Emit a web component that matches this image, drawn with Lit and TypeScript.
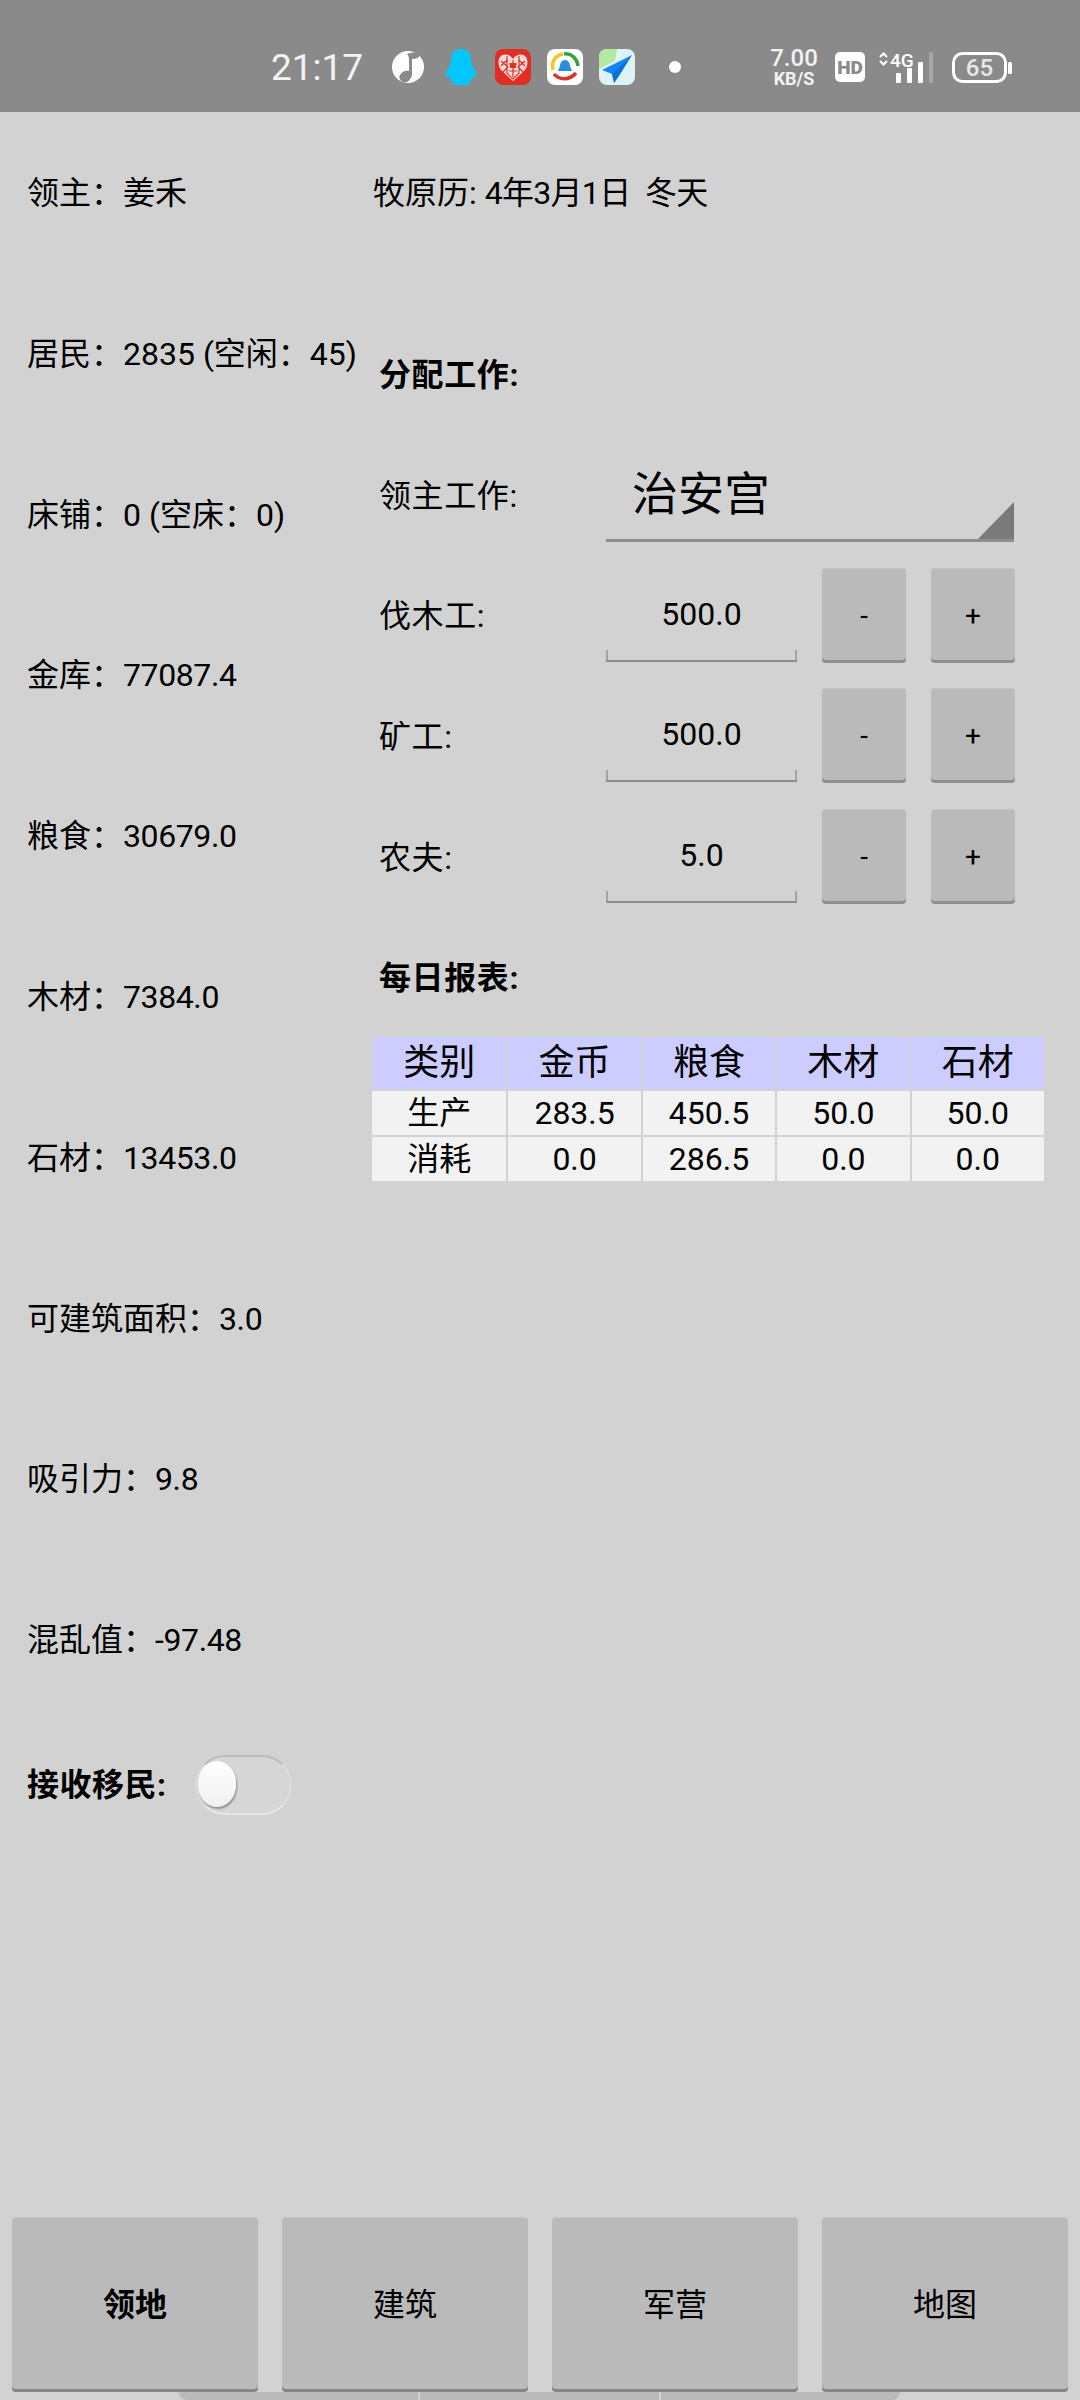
import { LitElement, html, css } from 'lit';
import { customElement } from 'lit/decorators.js';
import { classMap } from 'lit/directives/class-map.js';

const STATS = [
  { label: '领主：', value: '姜禾' },
  { label: '居民：', value: '2835 (空闲：45)' },
  { label: '床铺：', value: '0 (空床：0)' },
  { label: '金库：', value: '77087.4' },
  { label: '粮食：', value: '30679.0' },
  { label: '木材：', value: '7384.0' },
  { label: '石材：', value: '13453.0' },
  { label: '可建筑面积：', value: '3.0' },
  { label: '吸引力：', value: '9.8' },
  { label: '混乱值：', value: '-97.48' },
];

const WORKERS = [
  { label: '伐木工:', value: '500.0' },
  { label: '矿工:', value: '500.0' },
  { label: '农夫:', value: '5.0' },
];

const REPORT = [
  ['生产', '283.5', '450.5', '50.0', '50.0'],
  ['消耗', '0.0', '286.5', '0.0', '0.0'],
];

@customElement('status-bar')
export class StatusBar extends LitElement {
  static styles = css`
    :host {
      display: flex;
      align-items: center;
      height: 112px;
      box-sizing: border-box;
      padding: 22px 0 0 271px;
      background: #8a8a8a;
      color: #f2f2f2;
      font-family: Roboto, sans-serif;
    }
    svg { display: block; flex: none; }
    .time { width: 91px; font-size: 37px; line-height: 1; }
    .music { margin-left: 30px; }
    .qq { margin-left: 21px; }
    .pdd { margin-left: 18px; }
    .news { margin-left: 16px; }
    .map { margin-left: 16px; }
    .dot {
      width: 12px;
      height: 12px;
      margin-left: 34px;
      border-radius: 50%;
      background: #fff;
    }
    .speed {
      width: 50px;
      margin-left: 88px;
      text-align: center;
      font-weight: 500;
    }
    .speed div:first-child { font-size: 24px; line-height: 24px; }
    .speed div:last-child { font-size: 18px; line-height: 18px; font-weight: 700; }
    .hd { margin-left: 16px; }
    .signal { margin-left: 14px; }
    .battery { margin-left: 19px; }
    text { font-family: Roboto, sans-serif; }
  `;

  render() {
    return html`
      <div class="time">21:17</div>
      <svg class="music" width="32" height="32" viewBox="0 0 32 32">
        <circle cx="16" cy="16" r="16" fill="#fff" />
        <path d="M15 3 C19 1 23 1 27 3 L27 6 C24 8 21 8 20 8 L20 24 C19 29 15 31.5 13 31.5 C9 31 6 27 8 24 C10 20 14 19 17 20 L17 8 C17 6 16 4 15 3 Z" fill="#8a8a8a" />
      </svg>
      <svg class="qq" width="32" height="36" viewBox="0 0 32 36">
        <path d="M16 0 C9 0 6 5 6 11 C6 14 5 16 3 20 C1 23 0 26 1 28 C2 29 3 28 4 27 C5 30 6 31 8 33 C6 34 7 36 11 36 L21 36 C25 36 26 34 24 33 C26 31 27 30 28 27 C29 28 30 29 31 28 C32 26 31 23 29 20 C27 16 26 14 26 11 C26 5 23 0 16 0 Z" fill="#00c8ff" />
      </svg>
      <svg class="pdd" width="36" height="36" viewBox="0 0 36 36">
        <rect width="36" height="36" rx="8" fill="#e02e24" />
        <path d="M18 10 C15 5 8 4 5 8 C2 13 4 19 7 22 L18 32 L29 22 C32 19 34 13 31 8 C28 4 21 5 18 10 Z" fill="#f6dcd8" />
        <path d="M6 12 L13 18 L8 23 M30 12 L23 18 L28 23 M12 7 L12 24 L18 30 L24 24 L24 7 M14 15 L22 15 M14 22 L22 22 M18 11 L18 28 M6 17 L12 11 M30 17 L24 11" stroke="#e02e24" stroke-width="1.2" fill="none" />
        <rect x="15" y="14" width="6" height="5" fill="#e02e24" />
      </svg>
      <svg class="news" width="36" height="36" viewBox="0 0 36 36">
        <rect width="36" height="36" rx="8" fill="#fff" />
        <path d="M6 21 C4 12 9 6 16 5" stroke="#f2c81e" stroke-width="3.5" fill="none" />
        <path d="M17 5 C24 4 30 9 31 17" stroke="#35a23c" stroke-width="3.5" fill="none" />
        <path d="M7 25 C12 31 22 32 29 24" stroke="#d8352a" stroke-width="3.5" fill="none" />
        <path d="M18 11 C21 11 23 14 23 17 L25 22 L11 22 L13 17 C13 14 15 11 18 11 Z" fill="#2a8fd8" />
      </svg>
      <svg class="map" width="36" height="36" viewBox="0 0 36 36">
        <rect width="36" height="36" rx="8" fill="#def3f6" />
        <path d="M0 8 A8 8 0 0 1 8 0 L18 0 L16 12 L0 20 Z" fill="#b5e8a0" />
        <path d="M33 6 L3 21 L13 25 L15 34 L20 27 Z" fill="#1486f0" />
        <path d="M33 6 L13 25 L15 34 Z" fill="#0a60c8" opacity="0.55" />
      </svg>
      <div class="dot"></div>
      <div class="speed">
        <div>7.00</div>
        <div>KB/S</div>
      </div>
      <svg class="hd" width="30" height="30" viewBox="0 0 30 30">
        <rect width="30" height="30" rx="5" fill="#fff" />
        <text x="15" y="21.5" text-anchor="middle" font-size="19" font-weight="900" fill="#8a8a8a">HD</text>
      </svg>
      <svg class="signal" width="54" height="40" viewBox="0 -4 54 40">
        <path d="M1 6 L4.5 2.5 L8 6 M1 10 L4.5 13.5 L8 10" stroke="#fff" stroke-width="2" fill="none" />
        <text x="11" y="16" font-size="19" font-weight="500" fill="#fff">4G</text>
        <rect x="17" y="22" width="5" height="10" rx="1" fill="#fff" />
        <rect x="28" y="17" width="5" height="15" rx="1" fill="#fff" />
        <rect x="39" y="11" width="5" height="21" rx="1" fill="#fff" />
        <rect x="50" y="1" width="4" height="31" rx="1" fill="#a6a6a6" />
      </svg>
      <svg class="battery" width="60" height="32" viewBox="0 0 60 32">
        <rect x="1.5" y="2.5" width="52" height="28" rx="9" fill="none" stroke="#fff" stroke-width="3" />
        <rect x="56" y="11" width="4" height="12" rx="1.5" fill="#fff" />
        <text x="27.5" y="25" text-anchor="middle" font-size="24" font-weight="500" fill="#e8e8e8">65</text>
      </svg>
    `;
  }
}

@customElement('app-root')
export class AppRoot extends LitElement {
  static styles = css`
    :host {
      display: flex;
      flex-direction: column;
      width: 1080px;
      height: 2400px;
      overflow: hidden;
      background: #d2d2d2;
      color: #000;
      font-family: Roboto, 'Noto Sans CJK SC', sans-serif;
      font-size: 32px;
    }
    .main {
      flex: 1;
      display: flex;
      min-height: 0;
    }
    .stats {
      width: 372px;
      flex: none;
      box-sizing: border-box;
      padding-left: 27px;
      margin-top: 1px;
      white-space: nowrap;
    }
    .stat {
      height: 160.8px;
      line-height: 160.8px;
      white-space: pre;
    }
    .tight { letter-spacing: -0.4px; }
    .toggle-row {
      display: flex;
      align-items: center;
      margin-top: 34px;
      height: 60px;
      font-weight: 700;
    }
    .toggle-label {
      width: 138px;
      padding-bottom: 6px;
      letter-spacing: 0.5px;
    }
    .switch {
      position: relative;
      width: 97px;
      height: 60px;
      margin-left: 30px;
      box-sizing: border-box;
      border-radius: 30px;
      background: #d6d6d6;
      border: 2px solid #dcdcdc;
      border-top-color: #bcbcbc;
      border-bottom-color: #e6e6e6;
    }
    .thumb {
      position: absolute;
      left: 1px;
      top: 4px;
      width: 38px;
      height: 46px;
      border-radius: 19px / 22px;
      background: linear-gradient(#ffffff, #f0f0f0);
      box-shadow: 1px 2px 2px #8f8f8f;
    }
    .side {
      flex: 1;
      min-width: 0;
      padding-top: 64px;
    }
    .date {
      display: block;
      margin-left: 1px;
      line-height: 34px;
      white-space: pre;
    }
    .date span { letter-spacing: -0.7px; }
    .work {
      margin-left: 7px;
      width: 636px;
      margin-top: 145px;
    }
    h2 {
      margin: 0;
      font-size: 32px;
      font-weight: 700;
      line-height: 40px;
      letter-spacing: 0.6px;
    }
    .work-form {
      margin-top: 52px;
      display: grid;
      grid-template-columns: 227px 191px 109px 109px;
      row-gap: 25.7px;
    }
    .label {
      align-self: center;
      padding-bottom: 4px;
      letter-spacing: 0.6px;
    }
    .select {
      position: relative;
      grid-column: 2 / 5;
      height: 95px;
      width: 408px;
      box-sizing: border-box;
      padding-left: 26px;
      border-bottom: 3px solid #8e8e8e;
      font-size: 46px;
      line-height: 94px;
    }
    .select::after {
      content: '';
      position: absolute;
      right: 0;
      bottom: 0;
      border-style: solid;
      border-width: 0 0 37px 36px;
      border-color: transparent transparent #7a7a7a transparent;
    }
    .input {
      position: relative;
      height: 94px;
      align-self: start;
      box-sizing: border-box;
      display: flex;
      align-items: center;
      justify-content: center;
      border-bottom: 2px solid #8e8e8e;
    }
    .input::before,
    .input::after {
      content: '';
      position: absolute;
      bottom: 0;
      width: 2px;
      height: 10px;
      background: #a4a4a4;
    }
    .input::before { left: 0; }
    .input::after { right: 0; }
    .step {
      justify-self: end;
      width: 84px;
      height: 95px;
      border: 0;
      padding: 0;
      border-radius: 4px;
      background: #bababa;
      box-shadow: inset 0 -3px 0 #8f8f8f, inset 0 1px 0 #c4c4c4;
      color: #000;
      font: inherit;
      font-size: 28px;
    }
    .report-title {
      margin-top: 54px;
    }
    table {
      margin: 39px 0 0 -7px;
      width: 672px;
      border-collapse: separate;
      border-spacing: 0;
      table-layout: fixed;
    }
    th, td {
      padding: 0;
      text-align: center;
      font-weight: 400;
      border-left: 2px solid #d2d2d2;
      line-height: 44px;
      font-size: 32px;
    }
    th:first-child, td:first-child { border-left: 0; }
    th {
      height: 52px;
      background: #ccccff;
      font-size: 36px;
      line-height: 52px;
    }
    td {
      background: #f2f2f2;
      height: 44px;
      border-top: 2px solid #d2d2d2;
    }
    .tabs {
      flex: none;
      display: grid;
      grid-template-columns: repeat(4, 246px);
      column-gap: 24px;
      padding-left: 12px;
    }
    .tabs button {
      height: 175px;
      border: 0;
      padding: 0 0 5px;
      border-radius: 4px;
      background: #bababa;
      box-shadow: inset 0 -3px 0 #858585, inset 0 1px 0 #c4c4c4;
      color: #000;
      font: inherit;
    }
    .tabs button.active { font-weight: 700; }
    .peek {
      flex: none;
      display: flex;
      gap: 2px;
      width: 721px;
      height: 8px;
      margin-left: 179px;
      border-radius: 0 0 8px 8px;
      overflow: hidden;
    }
    .peek span {
      flex: 1;
      background: #bababa;
    }
  `;

  render() {
    return html`
      <status-bar></status-bar>
      <div class="main">
        <div class="stats">
          ${STATS.map(
            (s) => html`<div class="stat">${s.label}<span class=${classMap({ tight: /^-?[\d.]+$/.test(s.value) })}>${s.value}</span></div>`
          )}
          <div class="toggle-row">
            <span class="toggle-label">接收移民:</span>
            <div class="switch"><div class="thumb"></div></div>
          </div>
        </div>
        <div class="side">
          <div class="date">牧原历: <span>4年3月1日  冬天</span></div>
          <div class="work">
            <h2>分配工作:</h2>
            <div class="work-form">
              <div class="label">领主工作:</div>
              <div class="select">治安宫</div>
              ${WORKERS.map(
                (w) => html`
                  <div class="label">${w.label}</div>
                  <div class="input">${w.value}</div>
                  <button class="step">-</button>
                  <button class="step">+</button>
                `
              )}
            </div>
            <h2 class="report-title">每日报表:</h2>
            <table>
              <tr>
                ${['类别', '金币', '粮食', '木材', '石材'].map((h) => html`<th>${h}</th>`)}
              </tr>
              ${REPORT.map(
                (row) => html`<tr>${row.map((c) => html`<td>${c}</td>`)}</tr>`
              )}
            </table>
          </div>
        </div>
      </div>
      <div class="tabs">
        <button class="active">领地</button>
        <button>建筑</button>
        <button>军营</button>
        <button>地图</button>
      </div>
      <div class="peek"><span></span><span></span><span></span></div>
    `;
  }
}
